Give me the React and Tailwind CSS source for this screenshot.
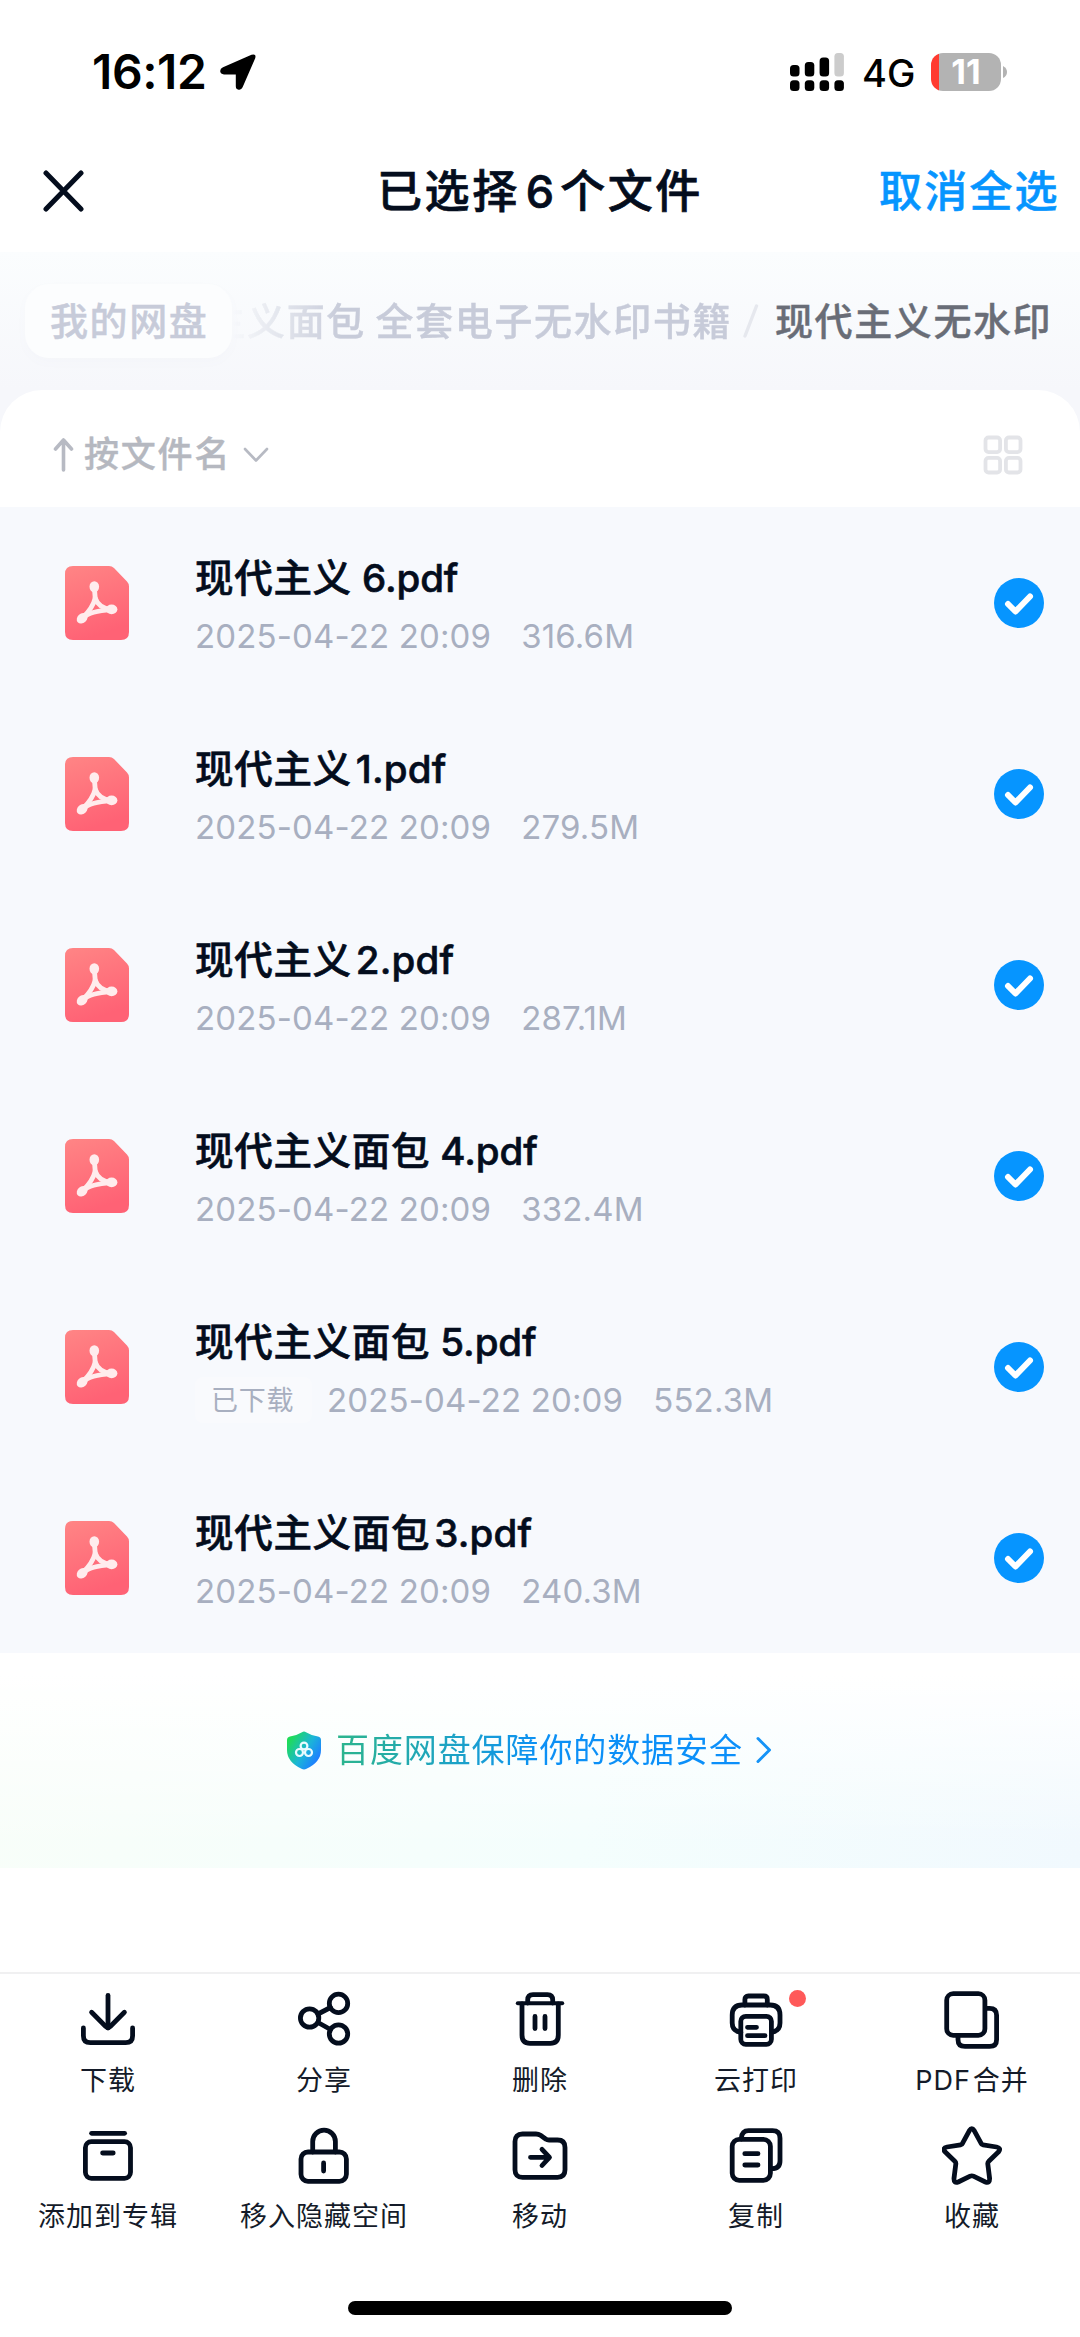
const FILES = [
  { name: '现代主义', suffix: ' 6.pdf', date: '2025-04-22 20:09', size: '316.6M' },
  { name: '现代主义', suffix: '1.pdf', date: '2025-04-22 20:09', size: '279.5M', tight: true },
  { name: '现代主义', suffix: '2.pdf', date: '2025-04-22 20:09', size: '287.1M', tight: true },
  { name: '现代主义面包', suffix: ' 4.pdf', date: '2025-04-22 20:09', size: '332.4M' },
  { name: '现代主义面包', suffix: ' 5.pdf', date: '2025-04-22 20:09', size: '552.3M', downloaded: true },
  { name: '现代主义面包', suffix: '3.pdf', date: '2025-04-22 20:09', size: '240.3M', tight: true },
]

const ACTIONS = [
  {
    label: '下载',
    icon: (
      <>
        <path d="M30 6.5V39" />
        <path d="M13.6 23.3L27.5 37.2Q30 39.7 32.5 37.2L46.4 23.3" />
        <path d="M5.4 39V46.7Q5.4 53.7 12.4 53.7H47.6Q54.6 53.7 54.6 46.7V39" />
      </>
    ),
  },
  {
    label: '分享',
    icon: (
      <>
        <circle cx="15.6" cy="29" r="9.2" />
        <circle cx="44.5" cy="14.4" r="9.2" />
        <circle cx="44.5" cy="45" r="9.2" />
        <path d="M24 25L36.5 18.5M24 33.5L36.5 40.5" />
      </>
    ),
  },
  {
    label: '删除',
    icon: (
      <>
        <path d="M7.8 14.3H52.2" strokeWidth="4" />
        <path d="M17.7 14V11Q17.7 5.6 23 5.6H37.4Q42.7 5.6 42.7 11V14" />
        <path d="M12 15V46Q12 54.3 20 54.3H40.3Q48.3 54.3 48.3 46V15" />
        <path d="M25 27.5V39.5M35 27.5V39.5" />
      </>
    ),
  },
  {
    label: '云打印',
    badge: true,
    icon: (
      <>
        <path d="M18.9 16V10.5Q18.9 7 22.4 7H37.8Q41.3 7 41.3 10.5V16" />
        <path d="M14.8 43.3Q6.2 42 6.2 34V26Q6.2 16 16 16H44.2Q54 16 54 26V34Q54 42 45.4 43.3" />
        <rect x="14.8" y="27.3" width="30.6" height="28" rx="5" />
        <path d="M21.5 38.3H30.5M21.5 46.7H39" />
      </>
    ),
  },
  {
    label: 'PDF',
    labelEnd: '合并',
    icon: (
      <>
        <rect x="4.7" y="4.7" width="38.2" height="41.6" rx="6.5" />
        <path d="M43 19.3H47.6Q54.6 19.3 54.6 26.3V50.4Q54.6 57.4 47.6 57.4H23Q16 57.4 16 50.4V47" strokeLinecap="butt" />
      </>
    ),
  },
  {
    label: '添加到专辑',
    icon: (
      <>
        <path d="M13.6 8.3H46.6" />
        <rect x="7.4" y="16.7" width="45.1" height="36.6" rx="6" />
        <path d="M24.6 28H35.2" />
      </>
    ),
  },
  {
    label: '移入隐藏空间',
    icon: (
      <>
        <path d="M18.7 27V16.5A11.35 11.35 0 0 1 41.4 16.5V27" />
        <rect x="7" y="27" width="45.4" height="29.3" rx="7" />
        <path d="M29.6 38V46" />
      </>
    ),
  },
  {
    label: '移动',
    icon: (
      <>
        <path d="M12.5 9H26Q28.5 9 30.5 10.3L36 14.2Q37 15 39 15H47.5Q55 15 55 22.5V44.8Q55 52.3 47.5 52.3H12.5Q5 52.3 5 44.8V16.5Q5 9 12.5 9Z" />
        <path d="M20.5 32.3H39M32 24.3L39.5 32.3L32 40.5" />
      </>
    ),
  },
  {
    label: '复制',
    icon: (
      <>
        <path d="M15.4 14V13Q16 5.7 22.5 5.7H46.5Q54 5.7 54 13.2V36Q54 43.7 45.5 43.7" />
        <rect x="6.2" y="14.3" width="38.2" height="41" rx="7" />
        <path d="M18.8 28.7H32M18.8 40H32" />
      </>
    ),
  },
  {
    label: '收藏',
    icon: (
      <path d="M27.4 5.6Q29.8 1.8 32.2 5.6L39 18.2Q39.6 19.6 41 19.8L54.6 22Q59.4 23 56.6 26.8L46.8 36.2Q45.6 37.4 45.8 39L47.6 53.4Q47.8 58.6 43.4 57L31.4 51.2Q29.8 50.4 28.2 51.2L16.2 57Q11.8 58.6 12 53.4L13.8 39Q14 37.4 12.8 36.2L3 26.8Q0.2 23 5 22L18.6 19.8Q20 19.6 20.6 18.2Z" />
    ),
  },
]

function StatusBar() {
  return (
    <div className="flex h-[124px] items-center pt-[19px] pl-[92px] pr-[72px] text-black">
      <span className="w-[128px] text-[48px] leading-none font-semibold tracking-[-0.4px]">16:12</span>
      <svg width="36" height="36" viewBox="0 0 36 36">
        <path d="M31.5 0.8Q36.6-0.8 35.2 4.3L22.6 33.3Q21.4 36.2 18.6 35.7Q15.8 35.2 15.8 32.2V20.4H4Q0.5 20.2 0.2 17.3Q0 14.6 3 13.3Z" />
      </svg>
      <div className="grow" />
      <svg width="56" height="40" viewBox="0 0 56 40" className="mr-[16px]">
        <rect x="0" y="13" width="9.5" height="11.5" rx="3.5" />
        <rect x="14.8" y="10" width="9.5" height="14.5" rx="3.5" />
        <rect x="29.6" y="5.5" width="9.5" height="19" rx="3.5" />
        <rect x="44.4" y="1" width="9.5" height="23.5" rx="3.5" fill="#cccccc" />
        <rect x="0" y="28.3" width="9.5" height="10.7" rx="3.5" />
        <rect x="14.8" y="28.3" width="9.5" height="10.7" rx="3.5" />
        <rect x="29.6" y="28.3" width="9.5" height="10.7" rx="3.5" />
        <rect x="44.4" y="28.3" width="9.5" height="10.7" rx="3.5" />
      </svg>
      <span className="w-[69px] pt-[3px] text-[38px] leading-none font-medium">4G</span>
      <div className="flex h-[38px] w-[70px] items-center justify-center rounded-[12px] bg-[linear-gradient(90deg,#ff3b30_8px,#b3b3b3_8px)] text-[34px] leading-none font-bold text-white">
        11
      </div>
      <svg width="6" height="12" viewBox="0 0 6 12" className="ml-[1px]">
        <path d="M1 0Q5 2 5 6T1 12Z" fill="#b3b3b3" />
      </svg>
    </div>
  )
}

function Header() {
  return (
    <header className="flex h-[128px] items-center justify-between pt-[6px] pl-[43px] pr-[23px]">
      <div className="w-[158px]">
        <svg width="41" height="42" viewBox="0 0 41 42" fill="none" stroke="#040d1d" strokeWidth="5" strokeLinecap="round">
          <path d="M3 3L38 39M38 3L3 39" />
        </svg>
      </div>
      <h1 className="flex items-center gap-[6px] text-[45px] leading-none font-medium tracking-[2.6px] text-[#040d1d] [-webkit-text-stroke:0.7px_#040d1d]">
        <span>已选择</span>
        <span className="tracking-normal">6</span>
        <span>个文件</span>
      </h1>
      <button className="w-[178px] text-left text-[43px] leading-none font-medium tracking-[2.2px] whitespace-nowrap text-[#0695ff] [-webkit-text-stroke:0.5px_#0695ff]">
        取消全选
      </button>
    </header>
  )
}

function Breadcrumb() {
  return (
    <nav className="flex h-[138px] items-center overflow-hidden bg-gradient-to-b from-[#fbfdfe] to-[#f6f7fb] pl-[25px] text-[38px] leading-none font-medium tracking-[1.6px] whitespace-nowrap text-[#c7cbd9] [-webkit-text-stroke:0.4px]">
      <div className="flex h-[74px] w-[207px] shrink-0 items-center rounded-[24px] bg-[#fcfdfe] pl-[25px] shadow-[0_4px_12px_rgba(120,130,160,0.025)]">
        我的网盘
      </div>
      <div className="flex w-[500px] shrink-0 justify-end [mask-image:linear-gradient(90deg,transparent,black_110px)]">
        <span className="[word-spacing:-2px]">主义面包 全套电子无水印书籍</span>
      </div>
      <svg width="16" height="34" viewBox="0 0 16 34" className="ml-[11px] shrink-0">
        <path d="M2 32L13.5 2" stroke="#e6e8ee" strokeWidth="3.4" strokeLinecap="round" />
      </svg>
      <span className="ml-[16px] text-[#696d77]">现代主义无水印</span>
    </nav>
  )
}

function SortBar() {
  return (
    <div className="bg-[#f6f7fb]">
      <div className="flex h-[117px] items-center rounded-t-[42px] bg-white pt-[12px] pl-[53px] pr-[57px]">
        <svg width="21" height="36" viewBox="0 0 21 36" fill="none" stroke="#b7bac3" strokeWidth="3.6" strokeLinecap="round" strokeLinejoin="round">
          <path d="M10.5 33V3M2.5 12L10.5 3L18.5 12" />
        </svg>
        <span className="ml-[10px] text-[35px] leading-none font-medium tracking-[1.8px] text-[#b5b8c0] [-webkit-text-stroke:0.4px]">按文件名</span>
        <svg width="26" height="16" viewBox="0 0 26 16" fill="none" stroke="#b7bac3" strokeWidth="2.6" strokeLinecap="round" strokeLinejoin="round" className="ml-[12px]">
          <path d="M2 2L13 13.5L24 2" />
        </svg>
        <div className="grow" />
        <svg width="40" height="40" viewBox="0 0 40 40" fill="none" stroke="#e3e4e8" strokeWidth="3.8">
          <rect x="2.5" y="2.5" width="14.6" height="14.6" rx="3" />
          <rect x="22.9" y="2.5" width="14.6" height="14.6" rx="3" />
          <rect x="2.5" y="22.9" width="14.6" height="14.6" rx="3" />
          <rect x="22.9" y="22.9" width="14.6" height="14.6" rx="3" />
        </svg>
      </div>
    </div>
  )
}

function PdfIcon() {
  return (
    <svg width="64" height="74" viewBox="0 0 64 74" className="shrink-0">
      <defs>
        <linearGradient id="pdf" x1="0" y1="0" x2="0.3" y2="1">
          <stop offset="0" stopColor="#ff8585" />
          <stop offset="1" stopColor="#ff6275" />
        </linearGradient>
      </defs>
      <path d="M8 0H44Q47 0 49 2L62 15.5Q64 17.5 64 20.5V66Q64 74 56 74H8Q0 74 0 66V8Q0 0 8 0Z" fill="url(#pdf)" />
      <g stroke="#ffeced" fill="none" strokeWidth="4.8" strokeLinecap="round" strokeLinejoin="round">
        <path d="M29.3 21L30.2 32Q28 41.500 18 51.5" />
        <path d="M30.2 32Q33.500 42 46 43.500" />
        <path d="M18 51.500Q25 45 46 43.800" />
      </g>
      <g fill="#ffeced">
        <ellipse cx="29.3" cy="20.8" rx="4.8" ry="5.600" />
        <ellipse cx="17.200" cy="52.200" rx="6" ry="4.700" transform="rotate(-42 17.200 52.200)" />
        <ellipse cx="46.600" cy="43.400" rx="5.800" ry="4.800" />
      </g>
    </svg>
  )
}

function FileRow({ file }) {
  return (
    <div className="flex h-[191px] items-center pl-[65px] pr-[36px]">
      <PdfIcon />
      <div className="ml-[66px] flex grow flex-col pt-[8px]">
        <div className="flex h-[52px] items-center text-[38.5px] leading-none font-medium whitespace-pre text-[#040d1d] [-webkit-text-stroke:0.6px_#040d1d]">
          <span className="tracking-[0.7px]">{file.name}</span>
          <span className={file.tight ? 'ml-[4px] tracking-[0.2px]' : 'tracking-[-0.1px]'}>{file.suffix}</span>
        </div>
        <div className="mt-[7px] flex h-[50px] items-center text-[33px] leading-none tracking-[0.15px] text-[#a8afc0]">
          {file.downloaded && (
            <span className="mr-[15px] flex h-[46px] w-[117px] items-center rounded-[8px] bg-[#f9fafd] pl-[16px] text-[27px] tracking-[0.8px]">
              已下载
            </span>
          )}
          <span>{file.date}</span>
          <span className="ml-[30px]">{file.size}</span>
        </div>
      </div>
      <svg width="50" height="50" viewBox="0 0 50 50" fill="none">
        <circle cx="25" cy="25" r="25" fill="#0695ff" />
        <path d="M14 26L21.5 33.5L36 18.5" stroke="white" strokeWidth="6" strokeLinecap="round" strokeLinejoin="round" />
      </svg>
    </div>
  )
}

function SecurityBanner() {
  return (
    <div className="h-[215px] bg-[linear-gradient(180deg,#ffffff_10%,rgba(255,255,255,0)_90%),linear-gradient(100deg,#f8fef9_0%,#f4fefd_55%,#f1f9fe_100%)]">
      <div className="flex items-center pt-[76px] pl-[287px]">
        <svg width="34" height="39" viewBox="0 0 34 39">
          <defs>
            <linearGradient id="shield" x1="0" y1="0.1" x2="1" y2="0.8">
              <stop offset="0.1" stopColor="#1fdc58" />
              <stop offset="0.55" stopColor="#1bb5d8" />
              <stop offset="0.9" stopColor="#1d80ff" />
            </linearGradient>
          </defs>
          <path d="M15 1.2Q17 0 19 1.2Q24 4.4 31 5.4Q34 6 34 9V19Q34 31 19.5 37.8Q17 39 14.5 37.8Q0 31 0 19V9Q0 6 3 5.4Q10 4.4 15 1.2Z" fill="url(#shield)" />
          <g fill="none" stroke="#e9fbff" strokeWidth="2.2">
            <circle cx="17" cy="15" r="3.4" />
            <circle cx="12.5" cy="21.5" r="3.5" />
            <circle cx="21.5" cy="21.5" r="3.5" />
          </g>
        </svg>
        <span className="ml-[15px] bg-[linear-gradient(90deg,#2cb58c_0%,#1aa0cc_32%,#0b90f5_50%,#0b8ffa_100%)] bg-clip-text text-[33px] leading-[42px] tracking-[0.9px] text-transparent">
          百度网盘保障你的数据安全
        </span>
        <svg width="16" height="28" viewBox="0 0 16 28" fill="none" stroke="#1593f7" strokeWidth="3" strokeLinecap="round" strokeLinejoin="round" className="ml-[13px]">
          <path d="M2 2.5L13.5 14L2 25.5" />
        </svg>
      </div>
    </div>
  )
}

function ActionButton({ action }) {
  return (
    <button className="flex h-[136px] w-[216px] flex-col items-center">
      <span className="relative">
        <svg width="60" height="60" viewBox="0 0 60 60" fill="none" stroke="#040d1d" strokeWidth="4.8" strokeLinecap="round" strokeLinejoin="round">
          {action.icon}
        </svg>
        {action.badge && <span className="absolute top-[1px] left-[63px] h-[17px] w-[17px] rounded-full bg-[#ff5959]" />}
      </span>
      <span className="mt-[14px] flex gap-[2px] text-[27px] leading-[36px] tracking-[1px] whitespace-nowrap text-[#141b29]">
        <span>{action.label}</span>
        {action.labelEnd && <span>{action.labelEnd}</span>}
      </span>
    </button>
  )
}

export default function App() {
  return (
    <div className="flex h-[2337px] w-[1080px] flex-col overflow-hidden bg-white font-[Inter,'Noto_Sans_CJK_SC',sans-serif]">
      <StatusBar />
      <Header />
      <Breadcrumb />
      <SortBar />
      <main className="bg-[#f7f9fd]">
        {FILES.map((file) => (
          <FileRow key={file.name + file.size} file={file} />
        ))}
      </main>
      <SecurityBanner />
      <footer className="mt-[104px] flex grow flex-col border-t-2 border-[#f0f0f1] pt-[15px]">
        <div className="flex flex-wrap">
          {ACTIONS.map((action) => (
            <ActionButton key={action.label} action={action} />
          ))}
        </div>
        <div className="mt-auto mb-[22px] h-[14px] w-[384px] self-center rounded-full bg-black" />
      </footer>
    </div>
  )
}
